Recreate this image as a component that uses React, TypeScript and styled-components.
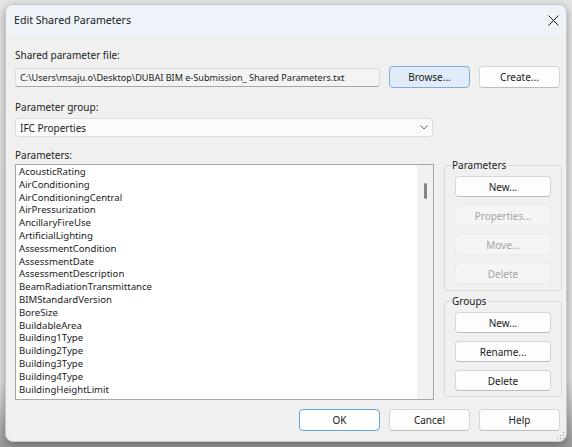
import React from "react";
import styled, { createGlobalStyle, css } from "styled-components";

const GlobalStyle = createGlobalStyle`
  html, body {
    margin: 0;
    padding: 0;
    background: #e2e2e2;
  }
  body {
    font-family: "Noto Sans", "Open Sans", sans-serif;
    font-size: 10px;
    color: #1b1b1b;
  }
`;

const Stage = styled.div`
  width: 572px;
  height: 447px;
  padding: 4px 5px 0 5px;
  box-sizing: border-box;
  background: linear-gradient(#e6e6e6 0%, #e2e2e2 85%, #9a9a9a 100%);
`;

const Window = styled.div`
  position: relative;
  width: 562px;
  height: 438px;
  box-sizing: border-box;
  border: 1px solid #c9c9c9;
  border-radius: 8px;
  background: #f0f0f0;
  overflow: hidden;
  box-shadow: 0 3px 10px rgba(0, 0, 0, 0.35);
  display: flex;
  flex-direction: column;
`;

const TitleBar = styled.div`
  height: 30px;
  flex: none;
  display: flex;
  align-items: center;
  justify-content: space-between;
  padding: 0 6px 0 8px;
  background: #eef3f9;
`;

const Title = styled.div`
  font-size: 10.6px;
  color: #1a1a1a;
`;

const CloseButton = styled.div`
  width: 14px;
  height: 14px;
  display: flex;
  align-items: center;
  justify-content: center;
`;

const Body = styled.div`
  flex: 1;
  display: flex;
  flex-direction: column;
  padding: 13px 4px 0 9px;
`;

const FieldLabel = styled.div<{ $gap?: number }>`
  height: 14px;
  line-height: 14px;
  margin-top: ${(p) => p.$gap ?? 0}px;
`;

const FileRow = styled.div`
  display: flex;
  align-items: center;
  gap: 9px;
  margin-top: 4px;
  padding-right: 2px;
  height: 22px;
`;

const PathBox = styled.div`
  width: 365px;
  height: 19px;
  box-sizing: border-box;
  display: flex;
  align-items: center;
  padding-left: 4px;
  font-size: 9.1px;
  background: #f4f4f4;
  border: 1px solid #dcdcdc;
  border-bottom-color: #a9a9a9;
  border-radius: 3px;
  white-space: nowrap;
  overflow: hidden;
`;

type Variant = "normal" | "accent" | "default" | "disabled";

const Button = styled.div<{ $variant?: Variant; $w?: number; $h?: number }>`
  width: ${(p) => p.$w ?? 81}px;
  height: ${(p) => p.$h ?? 22}px;
  box-sizing: border-box;
  display: flex;
  align-items: center;
  justify-content: center;
  border-radius: 4px;
  background: #fdfdfd;
  border: 1px solid #d6d6d6;
  border-bottom-color: #bdbdbd;
  color: #1b1b1b;
  ${(p) =>
    p.$variant === "accent" &&
    css`
      background: #e0edf9;
      border-color: #7eaede;
    `}
  ${(p) =>
    p.$variant === "default" &&
    css`
      border-color: #6aa4dc;
    `}
  ${(p) =>
    p.$variant === "disabled" &&
    css`
      background: #f5f5f5;
      border-color: #ececec;
      color: #a3a3a3;
    `}
`;

const Select = styled.div`
  width: 418px;
  height: 19px;
  margin-top: 4px;
  box-sizing: border-box;
  display: flex;
  align-items: center;
  justify-content: space-between;
  padding: 0 4px 0 4px;
  background: #fbfbfb;
  border: 1px solid #dcdcdc;
  border-radius: 3px;
`;

const MainArea = styled.div`
  display: grid;
  grid-template-columns: 419px 118px;
  column-gap: 10px;
  margin-top: 11px;
`;

const ListColumn = styled.div`
  display: flex;
  flex-direction: column;
`;

const ListBox = styled.div`
  margin-top: 2px;
  height: 236px;
  box-sizing: border-box;
  border: 1px solid #a7a7a7;
  background: #ffffff;
  display: flex;
`;

const Items = styled.div`
  flex: 1;
  padding: 1px 0 0 3px;
  overflow: hidden;
  font-size: 9.6px;
`;

const Item = styled.div`
  height: 12.8px;
  line-height: 12.8px;
  white-space: nowrap;
`;

const ScrollTrack = styled.div`
  width: 16px;
  background: #f1f1f1;
  display: flex;
  justify-content: center;
  padding-top: 18px;
  box-sizing: border-box;
`;

const ScrollThumb = styled.div`
  width: 3px;
  height: 16px;
  border-radius: 2px;
  background: #858585;
`;

const SideColumn = styled.div`
  display: flex;
  flex-direction: column;
  gap: 3px;
  padding-top: 10px;
`;

const GroupBox = styled.fieldset<{ $pb: number }>`
  margin: 0;
  padding: 4px 10px ${(p) => p.$pb}px 10px;
  border: 1px solid #dadada;
  border-radius: 3px;
  display: flex;
  flex-direction: column;
  gap: 8px;
  min-width: 0;
`;

const Legend = styled.legend`
  padding: 0 1px;
  margin-left: -4px;
  height: 14px;
  line-height: 14px;
  color: #1b1b1b;
`;

const Footer = styled.div`
  display: flex;
  justify-content: flex-end;
  gap: 9px;
  margin-top: 9px;
  padding-right: 2px;
`;

const Grip = styled.svg`
  position: absolute;
  right: 1px;
  bottom: 1px;
`;

const parameters = [
  "AcousticRating",
  "AirConditioning",
  "AirConditioningCentral",
  "AirPressurization",
  "AncillaryFireUse",
  "ArtificialLighting",
  "AssessmentCondition",
  "AssessmentDate",
  "AssessmentDescription",
  "BeamRadiationTransmittance",
  "BIMStandardVersion",
  "BoreSize",
  "BuildableArea",
  "Building1Type",
  "Building2Type",
  "Building3Type",
  "Building4Type",
  "BuildingHeightLimit",
];

export default function App() {
  return (
    <>
      <GlobalStyle />
      <Stage>
        <Window>
          <TitleBar>
            <Title>Edit Shared Parameters</Title>
            <CloseButton>
              <svg width="11" height="11" viewBox="0 0 11 11">
                <path d="M0.5 0.5 L10.5 10.5 M10.5 0.5 L0.5 10.5" stroke="#1a1a1a" strokeWidth="1" />
              </svg>
            </CloseButton>
          </TitleBar>
          <Body>
            <FieldLabel>Shared parameter file:</FieldLabel>
            <FileRow>
              <PathBox>C:\Users\msaju.o\Desktop\DUBAI BIM e-Submission_ Shared Parameters.txt</PathBox>
              <Button $variant="accent">Browse...</Button>
              <Button>Create...</Button>
            </FileRow>
            <FieldLabel $gap={12}>Parameter group:</FieldLabel>
            <Select>
              <span>IFC Properties</span>
              <svg width="8" height="5" viewBox="0 0 8 5">
                <path d="M0.5 0.5 L4 4 L7.5 0.5" stroke="#6a6a6a" fill="none" strokeWidth="1" />
              </svg>
            </Select>
            <MainArea>
              <ListColumn>
                <FieldLabel>Parameters:</FieldLabel>
                <ListBox>
                  <Items>
                    {parameters.map((p) => (
                      <Item key={p}>{p}</Item>
                    ))}
                  </Items>
                  <ScrollTrack>
                    <ScrollThumb />
                  </ScrollTrack>
                </ListBox>
              </ListColumn>
              <SideColumn>
                <GroupBox $pb={6}>
                  <Legend>Parameters</Legend>
                  <Button $w={96} $h={21}>New...</Button>
                  <Button $w={96} $h={21} $variant="disabled">Properties...</Button>
                  <Button $w={96} $h={21} $variant="disabled">Move...</Button>
                  <Button $w={96} $h={21} $variant="disabled">Delete</Button>
                </GroupBox>
                <GroupBox $pb={5}>
                  <Legend>Groups</Legend>
                  <Button $w={96} $h={21}>New...</Button>
                  <Button $w={96} $h={21}>Rename...</Button>
                  <Button $w={96} $h={21}>Delete</Button>
                </GroupBox>
              </SideColumn>
            </MainArea>
            <Footer>
              <Button $variant="default">OK</Button>
              <Button>Cancel</Button>
              <Button>Help</Button>
            </Footer>
          </Body>
          <Grip width="8" height="8" viewBox="0 0 8 8">
            <g fill="#a8a8a8">
              <rect x="6" y="0" width="1.2" height="1.2" />
              <rect x="3" y="3" width="1.2" height="1.2" />
              <rect x="6" y="3" width="1.2" height="1.2" />
              <rect x="0" y="6" width="1.2" height="1.2" />
              <rect x="3" y="6" width="1.2" height="1.2" />
              <rect x="6" y="6" width="1.2" height="1.2" />
            </g>
          </Grip>
        </Window>
      </Stage>
    </>
  );
}
